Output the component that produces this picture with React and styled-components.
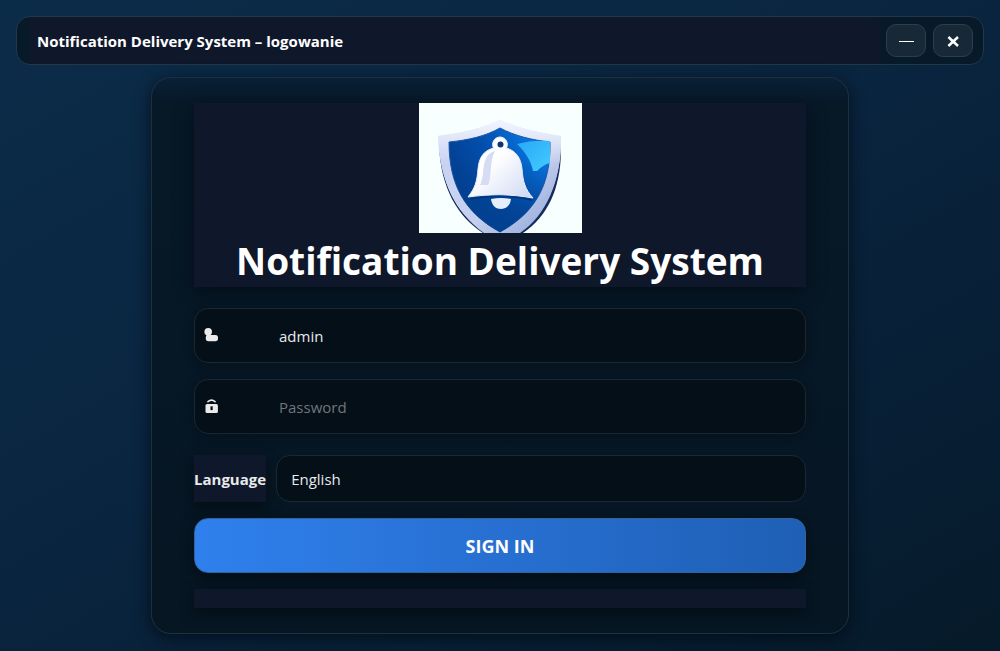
import React, { useState } from "react"
import styled, { createGlobalStyle } from "styled-components"

const App = () => {
  const [login, setLogin] = useState("admin")
  const [password, setPassword] = useState("")
  const [language, setLanguage] = useState("en")

  return (
    <Page>
      <GlobalStyle />
      <TitleBar>
        <WindowTitle>Notification Delivery System – logowanie</WindowTitle>
        <WindowButtons>
          <WindowButton type="button" aria-label="Minimize">
            <svg width="15" height="15" viewBox="0 0 15 15">
              <path d="M0 8.5h15" stroke="#fff" />
            </svg>
          </WindowButton>
          <WindowButton type="button" aria-label="Close">
            <svg width="15" height="15" viewBox="0 0 15 15">
              <path d="M2.4 4l9.6 9M12 4l-9.6 9" stroke="#fff" strokeWidth="2.5" />
            </svg>
          </WindowButton>
        </WindowButtons>
      </TitleBar>
      <Card onSubmit={event => event.preventDefault()}>
        <Header>
          <Logo />
          <Heading>Notification Delivery System</Heading>
        </Header>
        <Field>
          <UserIcon />
          <FieldInput
            type="text"
            aria-label="Login"
            value={login}
            onChange={event => setLogin(event.target.value)}
          />
        </Field>
        <Field>
          <LockIcon />
          <FieldInput
            type="password"
            aria-label="Password"
            placeholder="Password"
            value={password}
            onChange={event => setPassword(event.target.value)}
          />
        </Field>
        <LanguageRow>
          <LanguageLabel htmlFor="language">Language</LanguageLabel>
          <LanguageSelect
            id="language"
            value={language}
            onChange={event => setLanguage(event.target.value)}
          >
            <option value="en">English</option>
          </LanguageSelect>
        </LanguageRow>
        <SignInButton type="submit">SIGN IN</SignInButton>
        <Status role="status" />
      </Card>
    </Page>
  )
}

export default App

const UserIcon = () => (
  <svg width="16" height="16" viewBox="0 0 16 16" fill="#ebebeb" aria-hidden="true">
    <circle cx="5.2" cy="3.8" r="3.8" />
    <rect x="2.8" y="7" width="12.2" height="6.2" rx="2.6" />
    <path d="M3.500 6h4v3h-4z" />
  </svg>
)

const LockIcon = () => (
  <svg width="16" height="16" viewBox="0 0 16 16" fill="#ebebeb" aria-hidden="true">
    <path d="M5 2.7Q8.5 -0.4 12 2.7" fill="none" stroke="#ebebeb" strokeWidth="1.6" strokeLinecap="round" />
    <rect x="2.5" y="5" width="12.4" height="9" rx="1.6" />
    <path d="M7.5 7.3h2.2v3.8H7.500z" fill="#050d16" />
  </svg>
)

const Logo = () => (
  <svg width="163" height="130" viewBox="0 0 163 130" role="img" aria-label="Shield with a bell">
    <defs>
      <linearGradient id="rim" x1="0" y1="0" x2="1" y2="1">
        <stop offset="0" stopColor="#c3cdf0" />
        <stop offset="0.35" stopColor="#c9d3f2" />
        <stop offset="0.6" stopColor="#c4cfee" />
        <stop offset="1" stopColor="#8ba3d6" />
      </linearGradient>
      <linearGradient id="rimTop" x1="0" y1="0" x2="0" y2="1">
        <stop offset="0" stopColor="#f3f6fe" />
        <stop offset="1" stopColor="#f3f6fe" stopOpacity="0" />
      </linearGradient>
      <linearGradient id="field" x1="0" y1="0.7" x2="1" y2="0.2">
        <stop offset="0" stopColor="#023a86" />
        <stop offset="0.5" stopColor="#034fae" />
        <stop offset="1" stopColor="#0a80ec" />
      </linearGradient>
      <linearGradient id="depth" x1="0" y1="0" x2="0" y2="1">
        <stop offset="0.3" stopColor="#02408f" stopOpacity="0" />
        <stop offset="1" stopColor="#02408f" />
      </linearGradient>
      <linearGradient id="shine" x1="0" y1="0" x2="1" y2="1">
        <stop offset="0" stopColor="#28a8f6" />
        <stop offset="1" stopColor="#45cbff" />
      </linearGradient>
      <linearGradient id="bell" x1="0" y1="0" x2="1" y2="1">
        <stop offset="0.4" stopColor="#ffffff" />
        <stop offset="1" stopColor="#ccd7f3" />
      </linearGradient>
    </defs>
    <rect width="163" height="130" fill="#f8ffff" />
    <path
      d="M20 43C22 85 38 113 64 130H104C129 113 141 86 142 50L142 34C142 79 128 106 103 128H63C37 108 22 83 20 35Z"
      fill="#172c5c"
    />
    <path
      d="M19 33C42 30 62 26 81 17C101 26 121 30 142 33C143 76 128 112 101 130H65C36 109 20 76 19 33Z"
      fill="url(#rim)"
    />
    <path d="M19 33C42 30 62 26 81 17C101 26 121 30 142 33V62H19Z" fill="url(#rimTop)" />
    <path
      d="M30 39C50 37 67 33 81 25C96 33 113 37 131 39C132 82 116 110 81 129C46 110 30 82 30 39Z"
      fill="url(#field)"
      stroke="#1e56a7"
    />
    <path
      d="M30 39C50 37 67 33 81 25C96 33 113 37 131 39C132 82 116 110 81 129C46 110 30 82 30 39Z"
      fill="url(#depth)"
    />
    <path d="M98 41C108 38 120 37 131 38V60C126 61 122 64 118 68L114 68C112 57 106 49 98 41Z" fill="url(#shine)" />
    <path
      d="M81 34a7.5 7.5 0 0 0 -6.5 11C64 48 60 55 59 66C58 79 56 85 49 94C70 91 92 91 114 95C106 86 104 79 103 66C102 55 97 48 87.5 45A7.5 7.5 0 0 0 81 34Z"
      fill="url(#bell)"
      stroke="#e9f0fd"
    />
    <circle cx="81.5" cy="41.5" r="3" fill="#0a3576" />
    <path d="M76 48C65 51 65 62 64 71C63 77 62 81 61 82L69 82C73 75 70 59 76 48Z" fill="#d5dcf4" />
    <path d="M51 96Q82 90 113 97" fill="none" stroke="#033578" strokeWidth="1.5" />
    <path d="M72 96Q82 94 92 96C91 103 87 106 82 106S73 103 72 96Z" fill="#e6edfb" />
  </svg>
)

const GlobalStyle = createGlobalStyle`
  body {
    margin: 0;
    background: #0a2035;
  }
  *, *::before, *::after {
    box-sizing: border-box;
  }
  body, button, input, select {
    font-family: "Open Sans", "Noto Sans", sans-serif;
  }
`

const Page = styled.main`
  min-height: 100vh;
  padding: 16px;
  display: flex;
  flex-direction: column;
  gap: 12px;
  background: linear-gradient(150deg, #0b2c49 0%, #0a2540 45%, #071e33 80%, #061a29 100%);
`

const TitleBar = styled.header`
  display: flex;
  align-items: center;
  justify-content: space-between;
  height: 49px;
  padding: 0 10px 0 12px;
  border: 1px solid #233747;
  border-radius: 14px;
  background: #071a29;
`

const WindowTitle = styled.div`
  flex: 1;
  align-self: stretch;
  display: flex;
  align-items: center;
  margin-right: 7px;
  padding-left: 8px;
  background: #0f172a;
  color: #fff;
  font-size: 15px;
  font-weight: 700;
`

const WindowButtons = styled.div`
  display: flex;
  gap: 7px;
`

const WindowButton = styled.button`
  display: flex;
  align-items: center;
  justify-content: center;
  width: 40px;
  height: 33px;
  padding: 0;
  border: 1px solid #2d3e4b;
  border-radius: 10px;
  background: #172837;
`

const Card = styled.form`
  width: 100%;
  max-width: 698px;
  margin: 0 auto;
  padding: 25px 42px;
  display: flex;
  flex-direction: column;
  gap: 16px;
  border: 1px solid #1d303e;
  border-radius: 20px;
  background: linear-gradient(180deg, #092036 0, #071827 26px, #061623 100%);
  box-shadow: 0 4px 16px rgba(0, 8, 16, 0.7);
`

const Header = styled.div`
  display: flex;
  flex-direction: column;
  align-items: center;
  margin-bottom: 5px;
  background: #0f172a;
  box-shadow: 0 5px 16px rgba(2, 10, 16, 0.6);
`

const Heading = styled.h1`
  margin: 0;
  padding: 4px 0 2px;
  color: #fff;
  font-size: 37px;
  font-weight: 700;
  line-height: 48px;
`

const Field = styled.label`
  display: flex;
  align-items: center;
  gap: 60px;
  height: 55px;
  padding: 0 8px;
  border: 1px solid #1a2833;
  border-radius: 14px;
  background: #050f18;
  box-shadow: 0 4px 12px rgba(2, 10, 16, 0.3);
`

const FieldInput = styled.input`
  flex: 1;
  min-width: 0;
  padding: 0;
  border: 0;
  outline: 0;
  background: transparent;
  color: #e8eaec;
  font-size: 15px;
  &::placeholder {
    color: #70767c;
    opacity: 1;
  }
`

const LanguageRow = styled.div`
  display: flex;
  gap: 10px;
  margin-top: 5px;
`

const LanguageLabel = styled.label`
  display: flex;
  align-items: center;
  background: #0f172a;
  box-shadow: 0 5px 12px rgba(2, 10, 16, 0.7);
  color: #e8eaec;
  font-size: 15px;
  font-weight: 700;
`

const LanguageSelect = styled.select`
  flex: 1;
  height: 47px;
  padding: 0 14px;
  appearance: none;
  border: 1px solid #1a2833;
  border-radius: 14px;
  background: #050f18;
  color: #e8eaec;
  font-size: 15px;
`

const SignInButton = styled.button`
  height: 55px;
  border: 1px solid #31649f;
  border-radius: 14px;
  background: linear-gradient(90deg, #2f80ed, #1f5fb5);
  box-shadow: 0 5px 14px rgba(2, 10, 16, 0.7);
  color: #fff;
  font-size: 18px;
  font-weight: 700;
`

const Status = styled.div`
  height: 19px;
  background: #0f172a;
  box-shadow: 0 5px 14px rgba(2, 10, 16, 0.7);
`
